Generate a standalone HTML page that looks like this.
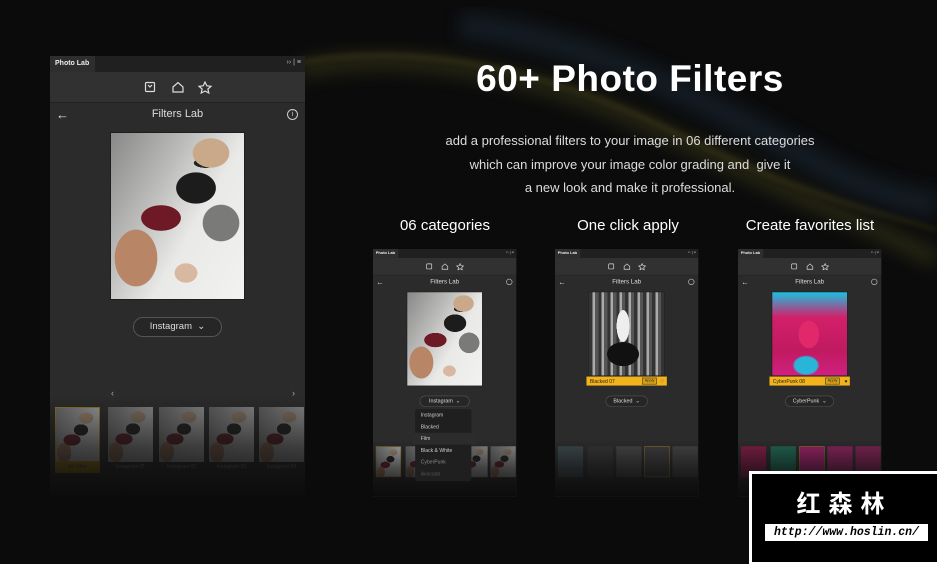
<!DOCTYPE html>
<html><head><meta charset="utf-8">
<style>
*{margin:0;padding:0;box-sizing:border-box}
body{width:937px;height:562px;overflow:hidden;background:#0b0b0c;font-family:"Liberation Sans",sans-serif;position:relative;color:#fff}
.abs{position:absolute}
.panel{position:absolute;width:255px;height:440px;background:#2b2b2b;overflow:hidden;transform-origin:0 0}
.panel .fade{position:absolute;left:0;top:340px;width:255px;height:100px;background:linear-gradient(rgba(12,12,12,0),rgba(12,12,12,.6) 50%,#0c0c0c)}
.tabbar{position:absolute;left:0;top:0;width:255px;height:16px;background:#202020}
.tab{position:absolute;left:0;top:0;width:45px;height:16px;background:#2e2e2e;font-size:7px;font-weight:bold;line-height:16px;padding-left:5px;color:#eee}
.tabr{position:absolute;right:4px;top:3px;font-size:7px;color:#bbb}
.tool{position:absolute;left:0;top:16px;width:255px;height:31px;background:#313131;border-bottom:1px solid #222}
.hdr{position:absolute;left:0;top:52px;width:255px;text-align:center;font-size:11px;color:#ddd}
.photo{position:absolute;left:60px;top:76px;width:135px;height:168px;background:#1e1e1e;padding:1px}
.photo div{width:100%;height:100%}
.beach{background:
radial-gradient(ellipse 30px 24px at 100px 20px,#c9a98a 60%,transparent 62%),
radial-gradient(ellipse 20px 8px at 95px 30px,#222 60%,transparent 62%),
radial-gradient(ellipse 28px 22px at 85px 55px,#1c1c1c 70%,transparent 72%),
radial-gradient(ellipse 28px 18px at 50px 85px,#6e1a26 70%,transparent 72%),
radial-gradient(ellipse 30px 40px at 25px 125px,#b88566 70%,transparent 72%),
radial-gradient(ellipse 14px 12px at 75px 140px,#d8b8a0 80%,transparent 82%),
radial-gradient(ellipse 30px 30px at 110px 90px,#7a7a78 60%,transparent 62%),
linear-gradient(120deg,#888 0%,#bdbdbb 35%,#e9e9e7 60%,#f2f2f0 100%)}
.tb{background:
radial-gradient(ellipse 12px 9px at 30px 10px,#c9a98a 60%,transparent 62%),
radial-gradient(ellipse 10px 8px at 25px 22px,#1c1c1c 70%,transparent 72%),
radial-gradient(ellipse 12px 8px at 16px 32px,#6e1a26 70%,transparent 72%),
radial-gradient(ellipse 10px 14px at 8px 45px,#b88566 70%,transparent 72%),
linear-gradient(120deg,#888,#ddd 60%,#eee)}
.drop{position:absolute;left:83px;top:261px;width:89px;height:20px;border:1px solid #555;border-radius:10px;background:#262626;font-size:9.5px;line-height:18px;text-align:center;color:#ddd}
.arr{position:absolute;top:332px;font-size:9px;color:#aaa}
.th{position:absolute;top:351px;width:45px;height:55px}
.thl{position:absolute;top:406px;width:45px;height:11px;font-size:5px;text-align:center;color:#777;line-height:11px}
</style></head><body>

<svg class="abs" style="left:0;top:0" width="937" height="562">
<defs><filter id="b"><feGaussianBlur stdDeviation="8"/></filter><filter id="b2"><feGaussianBlur stdDeviation="3"/></filter></defs>
<path d="M300 70 C420 45 560 80 680 140 C780 190 860 220 937 260" stroke="#5b5a20" stroke-width="20" fill="none" opacity=".3" filter="url(#b)"/>
<path d="M300 62 C430 40 560 75 680 135 C790 190 870 210 937 230" stroke="#9a8c2a" stroke-width="3" fill="none" opacity=".25" filter="url(#b2)"/>
<path d="M460 25 C600 40 720 110 830 170 C880 195 910 200 937 205" stroke="#23384a" stroke-width="28" fill="none" opacity=".35" filter="url(#b)"/>
</svg>

<!-- MAIN PANEL -->
<div class="panel" style="left:50px;top:56px">
 <div class="tabbar"><div class="tab">Photo Lab</div><div class="tabr">›› | ≡</div></div>
 <div class="tool">
  <svg class="abs" style="left:94px;top:9px" width="70" height="13" fill="none" stroke="#ddd" stroke-width="1.2">
   <rect x="1.5" y="1.5" width="9" height="9" rx="1"/><path d="M4 4 L6 6 L8 4"/>
   <path d="M29 6 L34 1.5 L39 6 V11 H29 Z"/>
   <path d="M61 1 L62.8 4.8 L67 5.3 L63.9 8 L64.8 12 L61 10 L57.2 12 L58.1 8 L55 5.3 L59.2 4.8 Z"/>
  </svg>
 </div>
 <div class="hdr">Filters Lab</div>
 <div class="abs" style="left:6px;top:51px;font-size:13px;color:#ddd">←</div>
 <div class="abs" style="left:237px;top:53px;width:11px;height:11px;border:1px solid #ccc;border-radius:50%;font-size:7px;text-align:center;line-height:9px;color:#ccc">i</div>
 <div class="photo"><div class="beach"></div></div>
 <div class="drop">Instagram &nbsp;⌄</div>
 <div class="arr" style="left:61px">‹</div><div class="arr" style="left:242px">›</div>
 <div class="th tb" style="left:5px;border:1px solid #c9a227;opacity:.6"></div><div class="thl" style="left:5px;background:#8a6d12;color:#333">No Filter</div>
 <div class="th tb" style="left:58px;opacity:.5"></div><div class="thl" style="left:58px">Instagram 01</div>
 <div class="th tb" style="left:109px;opacity:.5"></div><div class="thl" style="left:109px">Instagram 02</div>
 <div class="th tb" style="left:159px;opacity:.5"></div><div class="thl" style="left:159px">Instagram 03</div>
 <div class="th tb" style="left:209px;opacity:.5"></div><div class="thl" style="left:209px">Instagram 04</div>
 <div class="fade"></div>
</div>

<!-- TEXT -->
<div class="abs" style="left:330px;top:58px;width:600px;text-align:center;font-size:37px;font-weight:bold;letter-spacing:0.5px">60+ Photo Filters</div>
<div class="abs" style="left:330px;top:129px;width:600px;text-align:center;font-size:13px;line-height:23.5px;color:#ddd">add a professional filters to your image in 06 different categories<br>which can improve your image color grading and&nbsp; give it<br>a new look and make it professional.</div>
<div class="abs" style="left:360px;top:217px;width:170px;text-align:center;font-size:15px">06 categories</div>
<div class="abs" style="left:543px;top:217px;width:170px;text-align:center;font-size:15px">One click apply</div>
<div class="abs" style="left:725px;top:217px;width:170px;text-align:center;font-size:15px">Create favorites list</div>

<!-- SMALL PANELS -->
<div class="panel" style="left:373px;top:249px;transform:scale(0.562)">
 <div class="tabbar"><div class="tab">Photo Lab</div><div class="tabr">›› | ≡</div></div>
 <div class="tool"><svg class="abs" style="left:94px;top:9px" width="70" height="13" fill="none" stroke="#ddd" stroke-width="1.2"><rect x="1.5" y="1.5" width="9" height="9" rx="1"/><path d="M29 6 L34 1.5 L39 6 V11 H29 Z"/><path d="M61 1 L62.8 4.8 L67 5.3 L63.9 8 L64.8 12 L61 10 L57.2 12 L58.1 8 L55 5.3 L59.2 4.8 Z"/></svg></div>
 <div class="hdr">Filters Lab</div><div class="abs" style="left:6px;top:51px;font-size:13px;color:#ddd">←</div>
 <div class="abs" style="left:237px;top:53px;width:11px;height:11px;border:1px solid #ccc;border-radius:50%"></div>
 <div class="photo"><div class="beach"></div></div>
 <div class="drop">Instagram &nbsp;⌄</div>
 <div class="th tb" style="left:5px;border:1px solid #c9a227;opacity:.7"></div>
 <div class="th tb" style="left:58px;opacity:.55"></div><div class="th tb" style="left:109px;opacity:.55"></div><div class="th tb" style="left:159px;opacity:.55"></div><div class="th tb" style="left:209px;opacity:.55"></div>
 <div class="fade"></div>
 <div class="abs" style="left:75px;top:285px;width:100px;height:128px;background:#1f1f1f;border-radius:4px;font-size:9px;color:#ccc;line-height:21px;padding-left:10px">Instagram<br>Blacked<br><span style="display:block;margin-left:-14px;padding-left:14px;background:#2c2c2c;width:112px">Film</span>Black &amp; White<br><span style="color:#888">CyberPunk</span><br><span style="color:#555">Avocado</span></div>
</div>

<div class="panel" style="left:555px;top:249px;transform:scale(0.562)">
 <div class="tabbar"><div class="tab">Photo Lab</div><div class="tabr">›› | ≡</div></div>
 <div class="tool"><svg class="abs" style="left:94px;top:9px" width="70" height="13" fill="none" stroke="#ddd" stroke-width="1.2"><rect x="1.5" y="1.5" width="9" height="9" rx="1"/><path d="M29 6 L34 1.5 L39 6 V11 H29 Z"/><path d="M61 1 L62.8 4.8 L67 5.3 L63.9 8 L64.8 12 L61 10 L57.2 12 L58.1 8 L55 5.3 L59.2 4.8 Z"/></svg></div>
 <div class="hdr">Filters Lab</div><div class="abs" style="left:6px;top:51px;font-size:13px;color:#ddd">←</div>
 <div class="abs" style="left:237px;top:53px;width:11px;height:11px;border:1px solid #ccc;border-radius:50%"></div>
 <div class="photo" style="height:150px"><div style="background:radial-gradient(ellipse 40px 30px at 60px 110px,#111 70%,transparent 72%),radial-gradient(ellipse 16px 40px at 60px 60px,#eee 70%,transparent 72%),repeating-linear-gradient(90deg,#333 0 6px,#aaa 6px 10px,#555 10px 16px)"></div></div>
 <div class="abs" style="left:56px;top:227px;width:143px;height:16px;background:#f3b41b;color:#222;font-size:9px;line-height:16px;padding-left:6px">Blacked 07<span style="position:absolute;right:18px;top:2px;background:#d9a215;border:1px solid #333;font-size:7px;line-height:10px;padding:0 3px">Apply</span><span style="position:absolute;right:4px">♡</span></div>
 <div class="drop" style="left:90px;width:75px">Blacked &nbsp;⌄</div>
 <div class="th" style="left:5px;background:#4a5a60;opacity:.6"></div><div class="th" style="left:58px;background:#3a3a3a;opacity:.6"></div><div class="th" style="left:109px;background:#555;opacity:.6"></div><div class="th" style="left:159px;background:#444;border:1px solid #c9a227;opacity:.7"></div><div class="th" style="left:209px;background:#555;opacity:.6"></div>
 <div class="fade"></div>
</div>

<div class="panel" style="left:738px;top:249px;transform:scale(0.562)">
 <div class="tabbar"><div class="tab">Photo Lab</div><div class="tabr">›› | ≡</div></div>
 <div class="tool"><svg class="abs" style="left:94px;top:9px" width="70" height="13" fill="none" stroke="#ddd" stroke-width="1.2"><rect x="1.5" y="1.5" width="9" height="9" rx="1"/><path d="M29 6 L34 1.5 L39 6 V11 H29 Z"/><path d="M61 1 L62.8 4.8 L67 5.3 L63.9 8 L64.8 12 L61 10 L57.2 12 L58.1 8 L55 5.3 L59.2 4.8 Z"/></svg></div>
 <div class="hdr">Filters Lab</div><div class="abs" style="left:6px;top:51px;font-size:13px;color:#ddd">←</div>
 <div class="abs" style="left:237px;top:53px;width:11px;height:11px;border:1px solid #ccc;border-radius:50%"></div>
 <div class="photo" style="height:150px"><div style="background:radial-gradient(ellipse 30px 40px at 65px 75px,#e0286a 60%,transparent 62%),radial-gradient(ellipse 40px 30px at 60px 130px,#2ab5d8 50%,transparent 60%),linear-gradient(#1cc0e0 0%,#d3206a 30%,#c01a60 70%,#d02080 100%)"></div></div>
 <div class="abs" style="left:56px;top:227px;width:143px;height:16px;background:#f3b41b;color:#222;font-size:9px;line-height:16px;padding-left:6px">CyberPunk 08<span style="position:absolute;right:18px;top:2px;background:#d9a215;border:1px solid #333;font-size:7px;line-height:10px;padding:0 3px">Apply</span><span style="position:absolute;right:4px">♥</span></div>
 <div class="drop" style="left:84px;width:87px">CyberPunk &nbsp;⌄</div>
 <div class="th" style="left:5px;background:#a01a50;opacity:.7"></div><div class="th" style="left:58px;background:#1a8a6a;opacity:.6"></div><div class="th" style="left:109px;background:#c0207a;border:1px solid #c9a227;opacity:.7"></div><div class="th" style="left:159px;background:#c0207a;opacity:.6"></div><div class="th" style="left:209px;background:#b0206a;opacity:.6"></div>
 <div class="fade"></div>
</div>

<!-- WATERMARK -->
<div class="abs" style="left:749px;top:471px;width:190px;height:93px;background:#fff"></div>
<div class="abs" style="left:752px;top:474px;width:190px;height:88px;background:#000"></div>
<div class="abs" style="left:752px;top:484px;width:185px;text-align:center;font-family:'Liberation Sans','Noto Sans CJK SC',sans-serif;font-size:24px;font-weight:bold;letter-spacing:8px;color:#fff">红森林</div>
<div class="abs" style="left:765px;top:524px;width:163px;height:17px;background:#fff;color:#000;font-family:'Liberation Mono',monospace;font-style:italic;font-weight:bold;font-size:11.5px;line-height:17px;text-align:center">http://www.hoslin.cn/</div>
</body></html>
